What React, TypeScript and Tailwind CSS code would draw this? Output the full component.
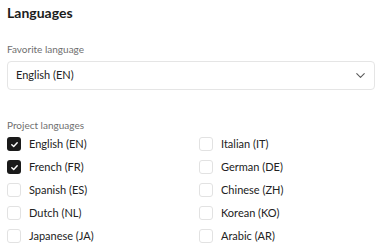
import React, { useState } from "react";
import { ChevronDown } from "lucide-react";

type Lang = { label: string; checked: boolean };

const initial: Lang[] = [
  { label: "English (EN)", checked: true },
  { label: "Italian (IT)", checked: false },
  { label: "French (FR)", checked: true },
  { label: "German (DE)", checked: false },
  { label: "Spanish (ES)", checked: false },
  { label: "Chinese (ZH)", checked: false },
  { label: "Dutch (NL)", checked: false },
  { label: "Korean (KO)", checked: false },
  { label: "Japanese (JA)", checked: false },
  { label: "Arabic (AR)", checked: false },
];

const App: React.FC = () => {
  const [langs, setLangs] = useState<Lang[]>(initial);

  const toggle = (index: number) => {
    const next = [...langs];
    next[index] = { ...next[index], checked: !next[index].checked };
    setLangs(next);
  };

  return (
    <div
      className="w-[382px] h-[248px] overflow-hidden bg-white px-[7px] pt-[2px]"
      style={{ fontFamily: "Lato, 'Noto Sans', sans-serif" }}
    >
      <h2 className="text-[14px] font-bold leading-[22px] text-[#1c1c1c]">
        Languages
      </h2>

      <div className="mt-[18px] text-[10px] leading-[14px] text-[#6f6f6f]">
        Favorite language
      </div>
      <div className="mt-[5px] h-[29px] flex items-center justify-between rounded-[4px] border border-[#e5e5e5] pl-[8px] pr-[6px] text-[11px] text-[#222222]">
        <span>English (EN)</span>
        <ChevronDown size={15} strokeWidth={1.7} className="text-[#5a5a5a]" />
      </div>

      <div className="mt-[28px] text-[10px] leading-[14px] text-[#6f6f6f]">
        Project languages
      </div>
      <div className="mt-[5px] grid grid-cols-2 gap-x-4 gap-y-[9px]">
        {langs.map((lang, index) => (
          <label
            key={lang.label}
            className="flex items-center gap-2 h-[14px] text-[11px] text-[#222222] cursor-pointer"
            onClick={() => toggle(index)}
          >
            {lang.checked ? (
              <span className="flex items-center justify-center w-[14px] h-[14px] rounded-[3px] bg-[#1a1a1a]">
                <svg width="9" height="9" viewBox="0 0 10 10" fill="none">
                  <path
                    d="M2 5.2 L4.1 7.2 L8 3"
                    stroke="white"
                    strokeWidth="1.6"
                    strokeLinecap="round"
                    strokeLinejoin="round"
                  />
                </svg>
              </span>
            ) : (
              <span className="w-[14px] h-[14px] rounded-[3px] border border-[#e2e2e2]" />
            )}
            <span>{lang.label}</span>
          </label>
        ))}
      </div>
    </div>
  );
};

export default App;
